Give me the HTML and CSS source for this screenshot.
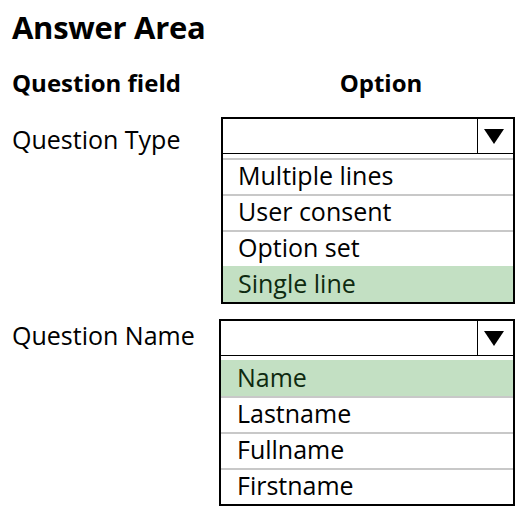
FILE: index.html
```html
<!DOCTYPE html>
<html>
<head>
<meta charset="utf-8">
<link rel="stylesheet" href="styles.css">
</head>
<body>
<div class="page">
  <h1 class="title">Answer Area</h1>
  <div class="head-row">
    <div class="head">Question field</div>
    <div class="head head-option">Option</div>
  </div>
  <div class="row">
    <div class="label">Question Type</div>
    <div class="dropdown">
      <div class="dd-head">
        <div class="dd-value"></div>
        <div class="dd-arrow"><span class="tri"></span></div>
      </div>
      <ul class="dd-list">
        <li class="opt">Multiple lines</li>
        <li class="opt">User consent</li>
        <li class="opt">Option set</li>
        <li class="opt selected">Single line</li>
      </ul>
    </div>
  </div>
  <div class="row row-2">
    <div class="label">Question Name</div>
    <div class="dropdown">
      <div class="dd-head">
        <div class="dd-value"></div>
        <div class="dd-arrow"><span class="tri"></span></div>
      </div>
      <ul class="dd-list">
        <li class="opt selected">Name</li>
        <li class="opt">Lastname</li>
        <li class="opt">Fullname</li>
        <li class="opt">Firstname</li>
      </ul>
    </div>
  </div>
</div>
</body>
</html>
```
FILE: styles.css
```css
html, body {
  margin: 0;
  padding: 0;
  background: #ffffff;
}
.page {
  font-family: "Open Sans", "Noto Sans", sans-serif;
  color: #000;
  padding: 6px 0 0 12px;
  width: 504px;
}
.title {
  margin: 0;
  font-size: 31px;
  font-weight: 700;
  line-height: 42px;
  letter-spacing: -0.3px;
}
.head-row {
  display: grid;
  grid-template-columns: 209px 294px;
  margin-top: 20px;
}
.head {
  font-size: 24px;
  font-weight: 700;
  line-height: 30px;
}
.head-option {
  text-align: center;
  padding-left: 26px;
}
.row {
  display: grid;
  grid-template-columns: 209px 294px;
  margin-top: 19px;
}
.row-2 {
  margin-top: 15px;
}
.label {
  font-size: 25px;
  line-height: 30px;
  padding-top: 7px;
}
.row-2 .label {
  padding-top: 1px;
}
.row-2 .dropdown {
  margin-left: -2px;
  width: 292px;
}
.row-2 .opt {
  padding-left: 16px;
}
.dropdown {
  border: 2px solid #000;
  width: 290px;
}
.dd-head {
  display: flex;
  height: 34px;
  border-bottom: 1px solid #000;
}
.dd-value {
  flex: 1;
}
.dd-arrow {
  width: 35px;
  border-left: 1px solid #000;
  display: flex;
  align-items: center;
  justify-content: center;
}
.tri {
  width: 0;
  height: 0;
  border-left: 10px solid transparent;
  border-right: 10px solid transparent;
  border-top: 15px solid #000;
  margin-right: 3px;
}
.dd-list {
  list-style: none;
  margin: 0;
  padding: 4px 0 0 0;
}
.opt {
  height: 34px;
  border-top: 2px solid #c8c8c8;
  font-size: 25px;
  line-height: 31px;
  padding-left: 15px;
  box-sizing: content-box;
}
.opt.selected {
  background: #c3e0c3;
  border-top-color: #c3e0c3;
  color: #0e2a10;
}
```
